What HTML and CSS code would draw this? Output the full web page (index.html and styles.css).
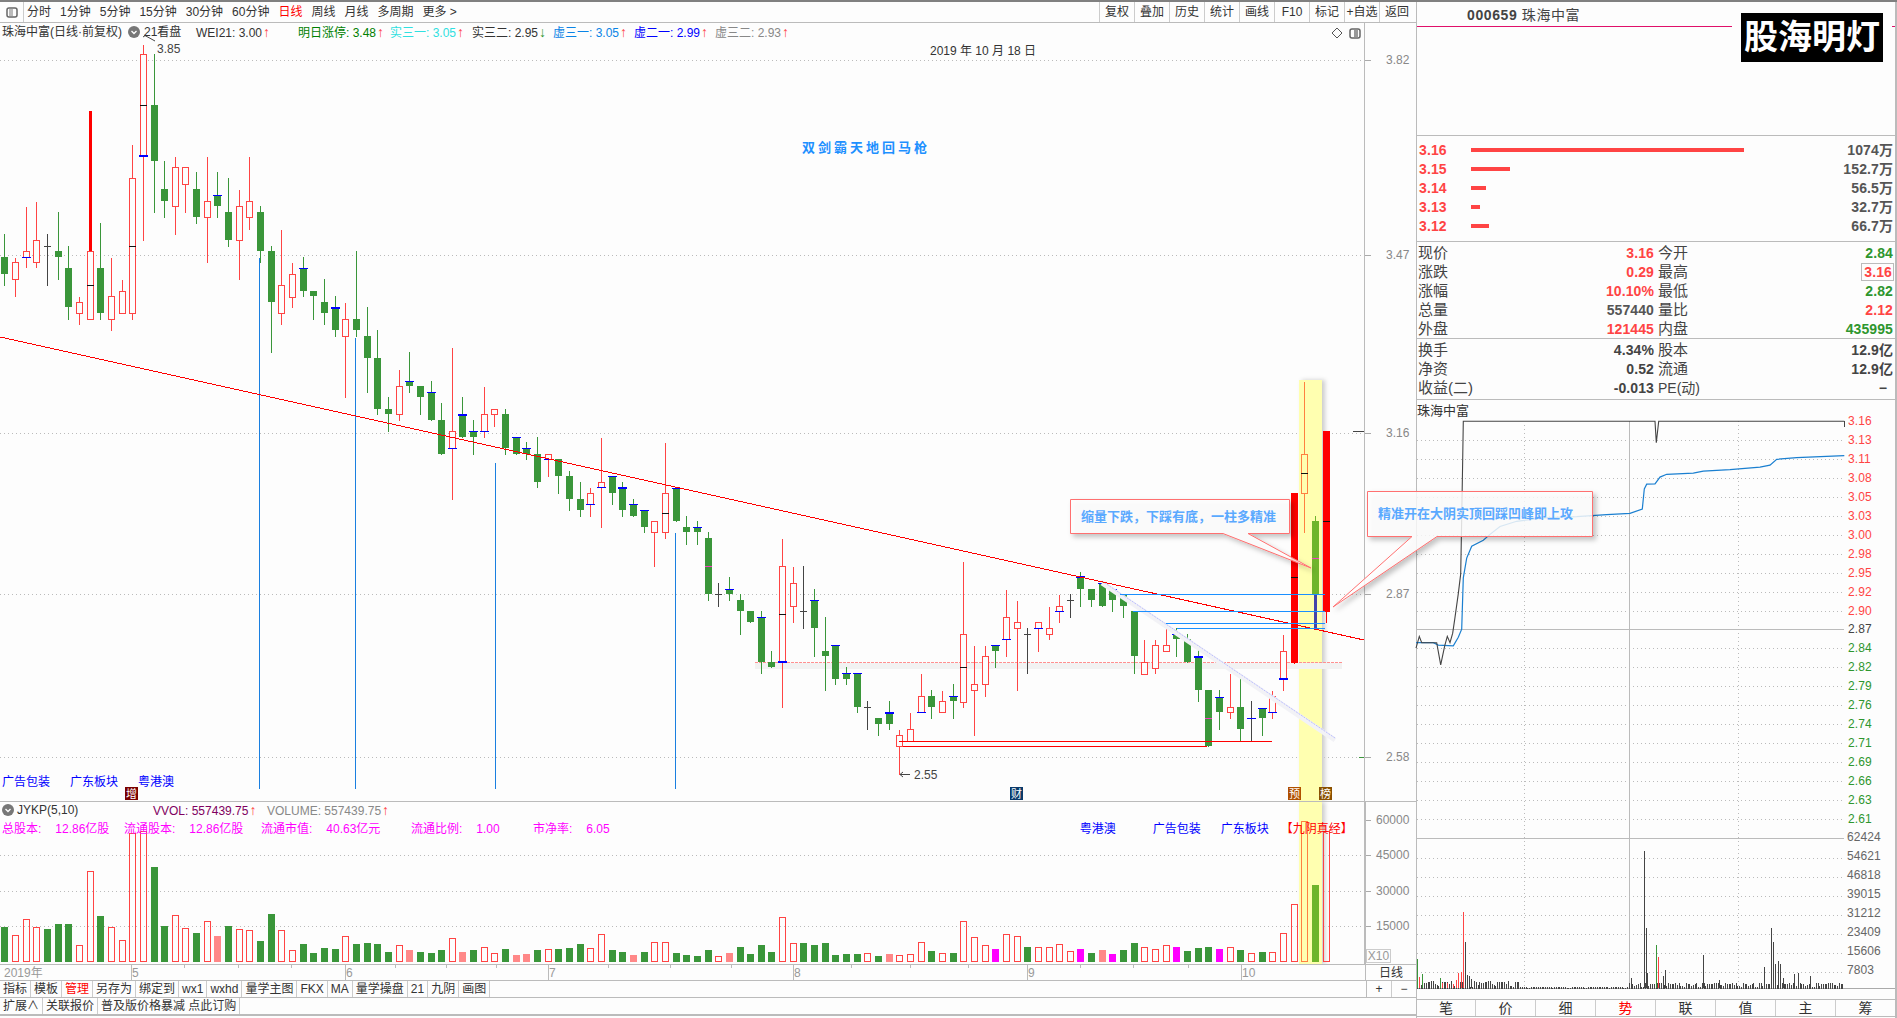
FILE: index.html
```html
<!DOCTYPE html><html lang="zh-CN"><head>
<meta charset="utf-8">
<title>珠海中富 日线</title>
<link rel="stylesheet" href="styles.css"></head><body>

<div class="app">
  <!-- LEFT : kline -->
  <div class="left">
    <div class="toolbar">
      <span class="panel-btn"><svg width="12" height="11" viewBox="0 0 12 11"><rect x="1" y="1" width="10" height="9" rx="2" fill="none" stroke="#666" stroke-width="1.5"/><rect x="3" y="2" width="4" height="7" fill="#bbb"/></svg></span>
      <nav class="periods">
        <span>分时</span><span>1分钟</span><span>5分钟</span><span>15分钟</span><span>30分钟</span><span>60分钟</span>
        <span class="on">日线</span><span>周线</span><span>月线</span><span>多周期</span><span>更多 &gt;</span>
      </nav>
      <div class="tools">
        <span>复权</span><span>叠加</span><span>历史</span><span>统计</span><span>画线</span><span>F10</span><span>标记</span><span>+自选</span><span>返回</span>
      </div>
    </div>

    <div class="pane pane-main">
      <svg id="kline" width="1415" height="778" viewBox="0 23 1415 778"></svg>
      <div class="legend legend-top">
        <span class="stock">珠海中富(日线·前复权)</span>
        <span class="lg-ico"><svg width="12" height="12" viewBox="0 0 12 12"><circle cx="6" cy="6" r="6" fill="#777"/><path d="M3.5 5l2.5 2.5L8.500 5" fill="none" stroke="#fff" stroke-width="1.300"/></svg></span>
        <span class="i-kan">21看盘</span>
        <span class="i-wei">WEI21: 3.00<b class="arr">↑</b></span>
        <span class="i-ming c-green">明日涨停: 3.48<b class="arr">↑</b></span>
        <span class="i-cyan c-cyan">实三一: 3.05<b class="arr">↑</b></span>
        <span class="i-s32">实三二: 2.95<b class="arr dn">↓</b></span>
        <span class="i-x31 c-sky">虚三一: 3.05<b class="arr">↑</b></span>
        <span class="i-x21 c-blue">虚二一: 2.99<b class="arr">↑</b></span>
        <span class="i-x32 c-gray">虚三二: 2.93<b class="arr">↑</b></span>
      </div>
      <div class="corner-ico">
        <svg width="12" height="12" viewBox="0 0 12 12"><path d="M6 1l5 5-5 5-5-5z" fill="none" stroke="#555"/></svg>
        <svg width="12" height="11" viewBox="0 0 12 11"><rect x="1" y="1" width="10" height="9" rx="2" fill="none" stroke="#666" stroke-width="1.500"/><rect x="5" y="2" width="4" height="7" fill="#999"/></svg>
      </div>
      <div class="sectors">
        <span>广告包装</span><span>广东板块</span><span>粤港澳</span>
      </div>
    </div>

    <div class="pane pane-vol">
      <svg id="volume" width="1415" height="162" viewBox="0 802 1415 162"></svg>
      <div class="legend legend-vol">
        <span class="lg-ico"><svg width="12" height="12" viewBox="0 0 12 12"><circle cx="6" cy="6" r="6" fill="#777"/><path d="M3.5 5l2.5 2.5L8.500 5" fill="none" stroke="#fff" stroke-width="1.300"/></svg></span>
        <span class="i-jykp">JYKP(5,10)</span>
        <span class="i-vvol c-purple">VVOL: 557439.75<b class="arr">↑</b></span>
        <span class="c-gray">VOLUME: 557439.75<b class="arr">↑</b></span>
      </div>
      <div class="legend legend-fin c-magenta">
        <span class="i-f1">总股本:<i></i>12.86亿股</span>
        <span class="i-f2">流通股本:<i></i>12.86亿股</span>
        <span class="i-f3">流通市值:<i></i>40.63亿元</span>
        <span class="i-f4">流通比例:<i></i>1.00</span>
        <span>市净率:<i></i>6.05</span>
        <span class="tag i-t1">粤港澳</span>
        <span class="tag i-t2">广告包装</span>
        <span class="tag i-t3">广东板块</span>
        <span class="tag-red">【九阴真经】</span>
      </div>
      <span class="x10">X10</span>
    </div>

    <div class="date-row">
      <svg id="dates" width="1365" height="15" viewBox="0 965 1365 15"></svg>
      <span class="period-name">日线</span>
    </div>

    <div class="btn-row">
      <div class="btns">
        <span>指标</span><span>模板</span><span class="on">管理</span><span>另存为</span><span>绑定到</span><span>wx1</span><span>wxhd</span><span>量学主图</span><span>FKX</span><span>MA</span><span>量学操盘</span><span>21</span><span>九阴</span><span>画图</span>
      </div>
      <div class="zoom-btns"><span>+</span><span>−</span></div>
    </div>
    <div class="btn-row btn-row-last">
      <div class="btns">
        <span>扩展∧</span><span>关联报价</span><span>普及版价格暴减 点此订购</span>
      </div>
    </div>
  </div>

  <!-- RIGHT : quote -->
  <aside class="right">
    <div class="head">
      <div class="title"><b>000659</b> 珠海中富</div>
      <div class="logo">股海明灯</div>
      <div class="head-tick"></div>
    </div>

    <div class="sell">
      <div class="sell-row"><b class="up">3.16</b><div><i style="width:273px"></i></div><b class="flat">1074万</b></div>
      <div class="sell-row"><b class="up">3.15</b><div><i style="width:39px"></i></div><b class="flat">152.7万</b></div>
      <div class="sell-row"><b class="up">3.14</b><div><i style="width:15px"></i></div><b class="flat">56.5万</b></div>
      <div class="sell-row"><b class="up">3.13</b><div><i style="width:9px"></i></div><b class="flat">32.7万</b></div>
      <div class="sell-row"><b class="up">3.12</b><div><i style="width:18px"></i></div><b class="flat">66.7万</b></div>
    </div>

    <div class="quote">
      <div class="q-row"><span>现价</span><b class="up">3.16</b><span>今开</span><b class="down">2.84</b></div>
      <div class="q-row"><span>涨跌</span><b class="up">0.29</b><span>最高</span><b class="up"><em class="boxed">3.16</em></b></div>
      <div class="q-row"><span>涨幅</span><b class="up">10.10%</b><span>最低</span><b class="down">2.82</b></div>
      <div class="q-row"><span>总量</span><b class="flat">557440</b><span>量比</span><b class="up">2.12</b></div>
      <div class="q-row"><span>外盘</span><b class="up">121445</b><span>内盘</span><b class="down">435995</b></div>
    </div>
    <div class="quote quote-fin">
      <div class="q-row"><span>换手</span><b class="dark">4.34%</b><span>股本</span><b class="dark">12.9亿</b></div>
      <div class="q-row"><span>净资</span><b class="dark">0.52</b><span>流通</span><b class="dark">12.9亿</b></div>
      <div class="q-row"><span>收益(二)</span><b class="dark">-0.013</b><span class="pe">PE(动)</span><b class="dark dash">−</b></div>
    </div>

    <div class="mini-name">珠海中富</div>
    <svg id="intraday" width="478" height="578" viewBox="1417 421 478 578"></svg>

    <div class="tabs">
      <span>笔</span><span>价</span><span>细</span><span class="on">势</span><span>联</span><span>值</span><span>主</span><span>筹</span>
    </div>
  </aside>
</div>

<!-- callouts sit over both columns -->
<svg class="notes" width="1897" height="1018" viewBox="0 0 1897 1018">
  <defs>
    <filter id="noteShadow" x="-10%" y="-10%" width="125%" height="140%">
      <feDropShadow dx="3" dy="3" stdDeviation="2.500" flood-color="#000" flood-opacity=".28"/>
    </filter>
  </defs>
  <path class="note" d="M1070.500 499.500H1289.500V533.500H1248L1311 568 1223 533.500H1070.500Z"/>
  <text class="note-text" x="1081" y="521">缩量下跌，下踩有底，一柱多精准</text>
  <path class="note" d="M1367.500 491.500H1592.500V536.500H1437L1333 607 1412 536.500H1367.500Z"/>
  <text class="note-text" x="1378" y="518">精准开在大阴实顶回踩凹峰即上攻</text>
</svg>

<script src="chart.js"></script>
</body></html>
```

FILE: styles.css
```css
/* ── shell ───────────────────────────────────────────────── */
*{box-sizing:border-box}
html,body{margin:0;height:100%;overflow:hidden}
body{position:relative;background:#fdfdfd;color:#333;
     font:12px/1 "Liberation Sans","Noto Sans CJK SC",sans-serif}
.app{display:flex;height:1018px;border-top:2px solid #808080}
.left{width:1416px;flex:none;display:flex;flex-direction:column}
.right{width:481px;flex:none;display:flex;flex-direction:column;
       border-left:1px solid #bbb;border-right:2px solid #bbb}
svg{display:block}
svg text{font-family:"Liberation Sans","Noto Sans CJK SC",sans-serif}

/* ── top toolbar ─────────────────────────────────────────── */
.toolbar{height:21px;display:flex;align-items:center;border-bottom:1px solid #bbb;flex:none}
.panel-btn{width:24px;height:100%;display:flex;align-items:center;justify-content:center;border-right:1px solid #ccc}
.periods{display:flex;gap:9px;margin-left:3px}
.periods .on{color:#f00}
.tools{margin-left:auto;display:flex;height:100%;margin-right:2px}
.tools span{width:35px;display:flex;align-items:center;justify-content:center;border-left:1px solid #ccc}

/* ── chart panes ─────────────────────────────────────────── */
.pane{position:relative;flex:none;border-bottom:1px solid #bbb}
.legend{position:absolute;left:0;display:flex;align-items:center;white-space:nowrap}
.legend-top{top:2px;height:14px;left:2px}
.legend-vol{top:1px;height:14px;left:2px}
.legend-fin{top:20px;height:14px;left:2px}
.legend-fin i{display:inline-block;width:14px}
.lg-ico{display:flex}
.arr{font-weight:700;color:#f44;font-size:14px;line-height:12px;margin-left:1px}
.arr.dn{color:#2e962e}
.stock{width:126px}
.i-kan{margin-left:4px;width:52px}
.i-wei{width:102px}
.i-ming{width:92px}
.i-cyan{width:82px}
.i-s32{width:81px}
.i-x31{width:81px}
.i-x21{width:81px}
.i-jykp{margin-left:3px;width:136px}
.i-vvol{width:114px}
.i-f1{width:122px}
.i-f2{width:137px}
.i-f3{width:150px}
.i-f4{width:122px}
.legend-fin .tag{color:#00f}
.legend-fin .i-t1{margin-left:470px;width:73px}
.legend-fin .i-t2{width:68px}
.legend-fin .i-t3{width:60px}
.tag-red{color:#f00}
.c-green{color:#008000}
.c-cyan{color:#2fe0e0}
.c-sky{color:#0a84e6}
.c-blue{color:#00f}
.c-gray{color:#888}
.c-purple{color:#800060}
.c-magenta{color:#f0f}
.corner-ico{position:absolute;top:4px;left:1331px;display:flex;gap:6px;align-items:center}
.sectors{position:absolute;left:2px;bottom:13px;display:flex;gap:20px;color:#00f}
.x10{position:absolute;left:1366px;bottom:1px;width:25px;height:14px;border:1px solid #ccc;
     color:#999;display:flex;align-items:center;justify-content:center}
.axis-label{fill:#888;font-size:12px}
.badge{fill:#fff;font-size:11px}
.hi-lo{fill:#444;font-size:12px}
.day{fill:#333;font-size:12px}
.sword{fill:#1e90ff;font-size:13px;font-weight:700;letter-spacing:3px}
.date-label{fill:#999;font-size:12px}

/* ── bottom bars ─────────────────────────────────────────── */
.date-row{height:16px;flex:none;display:flex;border-bottom:1px solid #bbb}
.period-name{flex:1;border-left:1px solid #bbb;display:flex;align-items:center;justify-content:center}
.btn-row{height:17px;flex:none;display:flex;border-bottom:1px solid #bbb}
.btn-row-last{height:18px;border-bottom-width:2px}
.btns{display:flex;height:100%}
.btns span{padding:0 3px;display:flex;align-items:center;border-right:1px solid #ccc}
.btns .on{color:#f00}
.zoom-btns{margin-left:auto;width:50px;display:flex;border-left:1px solid #bbb}
.zoom-btns span{flex:1;display:flex;align-items:center;justify-content:center}
.zoom-btns span+span{border-left:1px solid #ccc}

/* ── quote panel ─────────────────────────────────────────── */
.head{height:134px;flex:none;display:flex;align-items:flex-start;border-bottom:1px solid #bbb}
.title{width:315px;height:25px;padding:6px 0 0 50px;border-bottom:1px solid #e0106a;
       font-size:14px;letter-spacing:.6px;color:#444}
.logo{width:142px;height:49px;margin:11px 0 0 9px;background:#000;color:#fff;
      font-size:34px;font-weight:700;line-height:49px;text-align:center}
.head-tick{width:3px;height:1px;margin:24px 0 0 9px;background:#e0106a}
.up{color:#f44}
.down{color:#2e962e}
.flat{color:#555}
.dark{color:#444}
.sell{height:106px;flex:none;padding:4px 0 0 2px;border-bottom:1px solid #bbb}
.sell-row{height:19px;display:grid;grid-template-columns:52px 1fr auto;align-items:center;padding-right:2px}
.sell-row b,.q-row b{font-size:14px;letter-spacing:.1px}
.sell-row i{display:block;height:4px;background:#f44}
.quote{height:97px;flex:none;padding:1px 0 0 1px;border-bottom:1px solid #bbb}
.quote-fin{height:61px}
.q-row{height:19px;display:grid;grid-template-columns:60px 176px 60px 179px;align-items:center;
       font-size:15px;color:#444}
.q-row b{text-align:right}
.q-row span:nth-of-type(2){padding-left:4px}
.q-row .pe{font-size:14px}
.boxed{font-style:normal;display:inline-block;border:1px solid #bbb;padding:1px 1px 1px 2px;margin-right:-1px}
.dash{padding-right:6px}
.mini-name{height:21px;flex:none;padding:4px 0 0;font-size:13px}
#intraday{overflow:visible}
.tabs{height:18px;flex:none;display:flex;border-top:1px solid #bbb;border-bottom:1px solid #bbb;font-size:14px}
.tabs span{width:60px;flex:none;display:flex;align-items:center;justify-content:center;border-left:1px solid #ccc}
.tabs span:first-child{width:58px;border-left:0}
.tabs .on{color:#f00}
.mini-label{font-size:12px;letter-spacing:.1px}

/* ── callouts ────────────────────────────────────────────── */
.notes{position:absolute;left:0;top:0;pointer-events:none}
.note{fill:#fff;fill-opacity:.8;stroke:#ff7070;stroke-width:1;filter:url(#noteShadow)}
.note-text{fill:#5aa9ff;font-size:13px;font-weight:700}
```

FILE: chart.js
```js
/* colours */
const GREEN="#3a963a",RED="#ff4444",BG="#fdfdfd",GRID="#bbb",ORANGE="#ff8040",LIME="#6fb52c",
      PINK="#ff8888",MAGENTA="#ff00ff",BLUE="#0000ff",LINE_BLUE="#1a7fe0";

/* helpers */
const box=(x,y,w,h,c)=>`<rect x="${x}" y="${y}" width="${w}" height="${h}" fill="${c}"/>`;
const seg=(x1,y1,x2,y2,c,extra="")=>`<line x1="${x1}" y1="${y1}" x2="${x2}" y2="${y2}" stroke="${c}" ${extra}/>`;
const dotted=(x1,y,x2)=>seg(x1,y+.5,x2,y+.5,GRID,'stroke-dasharray="1 3"');
const label=(x,y,s,cls,fill)=>`<text x="${x}" y="${y}" class="${cls}"${fill?` fill="${fill}" style="fill:${fill}"`:""}>${s}</text>`;
const candleX=i=>Math.round(4.33+10.655*i);

/* candles, read off in thirds of a pixel from a base y
   [kind, high, bodyTop, bodyBottom, low, ...marks]  b=thin blue B=thick blue k=black m=magenta */
const groups=[
 {base:30,rows:[
  ['g',612,681,731,765],['r',685,697,748,797],['r',531,664,682,712,'b682'],['r',516,631,697,712],
  ['k',612,649,649,765],['g',546,663,680,746],['g',648,714,830,866],['r',800,817,850,881],
  ['r',664,664,868,868,'k766'],['g',579,714,848,866],['r',684,799,868,899],['r',750,784,850,850],
  ['r',345,445,850,866,'k649'],['r',45,73,378,630,'k226','B378'],['g',72,225,392,546],['g',393,477,512,560],
  ['r',381,412,529,612],['r',412,412,463,546],['g',426,477,560,578],['r',381,514,562,695],
  ['g',426,496,527,560,'b496'],['g',444,546,629,647],['r',480,529,631,746],['r',381,514,562,596],
  ['g',528,546,662,695]]},
 {base:200,rows:[
  ['g',138,153,305,455],['r',90,256,340,372],['r',190,223,290,320],['g',171,205,272,288,'b205'],
  ['g',273,273,288,356],['g',237,306,338,372],['g',288,323,389,407,'B323'],['r',310,358,409,590],
  ['g',153,358,389,407],['g',321,408,473,575],['g',390,473,626,642],['g',591,627,642,692],
  ['r',510,559,643,660],['g',457,544,557,576,'b544'],['g',558,558,590,642],['g',543,577,659,659,'b577'],
  ['g',610,660,761,761],['r',444,694,745,896,'b745'],['g',591,644,710,710,'B644'],['g',660,694,710,762,'b694'],
  ['r',561,643,694,710,'b694'],['r',628,628,643,678]]},
 {base:430,rows:[
  ['g',-63,-48,55,71],['g',22,22,71,71,'b22'],['g',37,55,71,87,'b55'],['g',21,71,155,170],
  ['r',73,73,88,137,'b88'],['g',87,87,137,188],['g',123,138,206,239],['g',156,207,239,257],
  ['r',174,190,223,257,'b223'],['r',24,157,172,290,'b172'],['g',139,139,188,221,'b139'],['g',156,174,239,257,'B174'],
  ['g',207,223,257,257,'b223'],['g',241,241,290,305,'b241'],['r',274,274,307,407],['r',39,190,307,323,'k250'],
  ['g',173,173,272,272,'b173'],['g',258,291,305,341],['g',273,292,305,341,'b292'],['g',307,324,491,509,'m409'],
  ['k',459,493,493,527],['g',441,478,491,509,'b478'],['g',491,511,542,611],['g',543,543,575,575],
  ['g',543,562,695,728,'b562'],['g',663,696,710,710],['r',327,409,695,830,'k553','B695'],['r',411,460,529,575],
  ['k',408,544,544,593],['g',477,511,593,677,'b511'],['g',561,663,678,779],['g',646,646,746,762,'b646'],
  ['g',711,730,746,762,'b730'],['g',730,730,830,846,'b730'],['k',813,831,831,896],['g',864,864,881,914],
  ['g',813,849,881,896,'B849'],['r',900,916,949,1033],['r',849,898,934,934],['r',732,799,847,847,'b847'],
  ['g',780,798,830,863],['r',783,814,847,847],['g',762,799,812,863,'b799'],['r',396,613,815,830,'k712'],
  ['r',648,763,781,914],['r',648,679,763,797],['g',646,646,662,711,'b646']]},
 {base:370,rows:[
  ['r',660,742,808,857,'b808'],['r',693,757,775,960],['k',775,792,792,908],['r',757,757,775,843,'b775'],
  ['r',711,775,793,807],['r',675,709,724,757,'b724'],['k',672,691,691,741],['g',606,622,657,708,'B622'],
  ['g',657,657,690,708],['g',632,639,708,708,'b639'],['g',658,658,690,723,'b658'],['g',673,673,708,741,'b673'],
  ['g',724,724,858,908],['r',810,877,911,911],['r',810,826,893,908],['r',760,826,844,844],
  ['g',775,793,807,857,'b793'],['g',793,807,876,876],['g',826,861,960,993,'B861'],['g',960,960,1128,1128,'m1045'],
  ['g',960,980,1025,1076,'b980'],['r',912,1012,1027,1043],['g',927,1011,1076,1113],['k',993,1045,1045,1113,'b1045'],
  ['g',1013,1013,1043,1094,'b1013'],['r',963,979,1027,1043,'b1027'],['r',795,844,927,960,'B927'],
  ['R',369,369,878,878,'k622'],['o',37,253,370,485,'k310'],['l',438,453,672,672,'m565'],['R',183,183,725,755,'k454']]}
];

/* volume tops, in thirds of a pixel below y=760 */
const vols=[
 ['g',501],['r',526],['r',478],['r',502],['g',507],['g',492],['g',492],['r',556],['r',334],['g',468],
 ['r',502],['r',541],['r',220],['r',214],['g',322],['g',498],['r',466],['r',505],['g',519],['r',484],
 ['p',528],['g',498],['r',508],['r',511],['g',543],['g',462],['r',511],['r',571],['g',552],['g',579],
 ['g',564],['g',567],['r',529],['g',552],['g',549],['g',552],['g',576],['r',556],['p',570],['g',576],
 ['g',579],['g',570],['r',535],['p',576],['g',570],['r',562],['r',580],['g',567],['p',585],['p',582],
 ['g',570],['r',568],['g',567],['g',564],['g',552],['r',565],['r',523],['g',570],['g',576],['p',585],
 ['g',576],['r',547],['r',547],['g',579],['g',585],['g',588],['g',570],['r',589],['p',579],['g',561],
 ['g',582],['g',555],['g',576],['r',472],['r',550],['g',549],['g',555],['g',549],['g',585],['g',582],
 ['g',582],['r',580],['g',588],['p',582],['r',586],['r',583],['r',547],['g',573],['r',580],['g',579],
 ['r',484],['r',532],['r',556],['m',567],['r',523],['r',529],['g',561],['r',562],['r',562],['r',553],
 ['r',574],['m',567],['g',579],['p',570],['m',582],['g',570],['g',549],['r',562],['r',568],['r',556],
 ['m',561],['g',573],['g',564],['g',561],['m',567],['r',562],['g',570],['r',580],['g',576],['r',576],
 ['r',520],['r',433],['o',184],['l',375],['r',214]];

function drawCandle(c,x,base){
  const Y=z=>Math.round(base+z/3),[kind,hi,top,bot,lo,...marks]=c;
  const col={g:GREEN,r:RED,k:"#444",R:"#ff0000",o:ORANGE,l:LIME}[kind];
  let s=box(x,Y(hi),1,Y(lo)-Y(hi)+1,col);
  const h=Math.max(Y(bot)-Y(top),1);
  if(kind==="k") s+=box(x-3,Y(top),7,1,col);
  else if(kind==="r"||kind==="o")
    s+=`<rect x="${x-2.5}" y="${Y(top)+.5}" width="6" height="${h}" fill="${kind==="o"?"#ffffb0":BG}" stroke="${col}"/>`;
  else s+=box(x-3,Y(top),7,h,col);
  marks.forEach(m=>{
    const t=m[0],y=Y(+m.slice(1));
    if(t==="b") s+=box(x-4,y,9,1,BLUE);
    if(t==="B") s+=box(x-4,y-1,9,2,BLUE);
    if(t==="k") s+=box(x-3,y,7,1,"#111");
    if(t==="m") s+=box(x-3,y,7,1,"#f040c0");
  });
  return s;
}

/* main chart */
function drawKline(){
  let s="";
  [60,255,433,594,757].forEach((y,n)=>{
    s+=dotted(0,y,1364)+seg(1364,y+.5,1371,y+.5,"#aaa");
    s+=label(1386,y+4,["3.82","3.47","3.16","2.87","2.58"][n],"axis-label");
  });
  s+=seg(1364.5,23,1364.5,801,"#bbb");
  s+=seg(1353,431.5,1364,431.5,"#444")+seg(1359,757.5,1364,757.5,GREEN);
  s+=box(1299,380,23,421,"#ffffb0").replace("<rect",'<rect style="filter:drop-shadow(3px 0 2px #ccc)"');

  /* blue marks */
  [[259,258],[355,338],[495,463],[675,533]].forEach(([x,y])=>{s+=box(x,y,1,789-y,LINE_BLUE)});

  /* dashed level */
  s+=box(755,663,587,6,"#f2f2f2")+seg(755,662.5,1342,662.5,"#ff9090",'stroke-dasharray="3 1"');

  s+=box(89,111,3,140,"#ff0000");
  let i=0;
  groups.forEach(g=>g.rows.forEach(c=>{s+=drawCandle(c,candleX(i++),g.base)}));
  s+=box(1314,594,3,35,"#4444aa");

  /* drawn lines */
  s+=seg(1102,583,1335,740,"#f2f2f6",'stroke-width="5"');
  s+=seg(1102,581,1335,738,"#b4b8ff",'stroke-dasharray="2 1" stroke-width=".9"');
  s+=`<g shape-rendering="crispEdges">`+seg(0,337,1364,640,"#ff0000")+
     seg(899,741.5,1272,741.5,"#ff0000")+seg(903,746.5,1207,746.5,"#ff0000");
  [[594,1120],[611,1133],[623,1166],[628,1177]].forEach(([y,x])=>{s+=seg(x,y+.5,1325,y+.5,"#1a8fff")});
  s+=`</g>`;

  /* texts on the canvas */
  s+=label(930,55,"2019 年 10 月 18 日","day");
  s+=label(802,152,"双剑霸天地回马枪","sword");
  s+=seg(143,37,146,35,"#444")+seg(144,35,155,41,"#444");
  s+=label(157,53,"3.85","hi-lo");
  s+=seg(900,774.5,910,774.5,"#444")+seg(900,774.5,903,772,"#444")+seg(900,774.5,903,777,"#444");
  s+=label(914,779,"2.55","hi-lo");
  [[125,"增","#7a0000"],[1010,"财","#0a3a6a"],[1288,"预","#b05000"],[1319,"榜","#8a5000"]].forEach(([x,t,c])=>{
    s+=box(x,787,13,13,c)+label(x+1,798,t,"badge");
  });
  document.getElementById("kline").innerHTML=s;
}

/* volume pane */
function drawVolume(){
  let s="";
  [[855,"45000"],[891,"30000"],[926,"15000"],[820,"60000"]].forEach(([y,t])=>{
    if(t!=="60000") s+=dotted(0,y,1364);
    s+=seg(1365,y+.5,1371,y+.5,"#aaa")+label(1376,y+4,t,"axis-label");
  });
  s+=box(1364,802,2,162,"#bbb");
  s+=box(1299,802,23,162,"#ffffb0").replace("<rect",'<rect style="filter:drop-shadow(3px 0 2px #ccc)"');
  vols.forEach(([kind,z],i)=>{
    const x=candleX(i),y=Math.round(760+z/3),h=962-y;
    if(kind==="r"||kind==="o")
      s+=`<rect x="${x-2.5}" y="${y+.5}" width="6" height="${h-1}" fill="none" stroke="${kind==="o"?ORANGE:RED}"/>`;
    else s+=box(x-3,y,7,h,{g:GREEN,p:PINK,m:MAGENTA,l:LIME}[kind]);
  });
  document.getElementById("volume").innerHTML=s;
}

/* date axis */
function drawDates(){
  let s=label(4,977,"2019年","date-label");
  [[131,"5"],[345,"6"],[548,"7"],[793,"8"],[1027,"9"],[1241,"10"]].forEach(([x,t])=>{
    s+=seg(x+.5,965,x+.5,980,"#bbb")+label(x+1,977,t,"date-label");
  });
  [184,238,291,395,446,496,608,670,731,851,910,968,1080,1133,1188].forEach(x=>{s+=seg(x+.5,965,x+.5,968,"#bbb")});
  document.getElementById("dates").innerHTML=s;
}

/* intraday, measured off the reference: z is 2.53 units per px below y=400 */
function drawIntraday(){
  const PX=z=>+(1410+z/3).toFixed(1),PY=z=>+(400+z/2.53).toFixed(1);
  const path=pts=>pts.map(([a,b])=>PX(a)+","+PY(b)).join(" ");
  const prices=["3.16","3.13","3.11","3.08","3.05","3.03","3.00","2.98","2.95","2.92","2.90","2.87",
                "2.84","2.82","2.79","2.76","2.74","2.71","2.69","2.66","2.63","2.61"];
  const volsAxis=["62424","54621","46818","39015","31212","23409","15606","7803"];
  let s="";
  prices.forEach((p,i)=>{
    const y=Math.round(421+i*18.95);
    if(i&&i!==11) s+=dotted(1417,y,1844);
    s+=label(1848,y+4,p,"mini-label",i<11?"#ff4444":i===11?"#444":"#2e962e");
  });
  volsAxis.forEach((p,i)=>{
    const y=Math.round(838.5+i*19);
    if(i) s+=dotted(1417,y,1844);
    s+=label(1847,y+2,p,"mini-label","#666");
  });
  s+=seg(1524.5,421,1524.5,988,GRID,'stroke-dasharray="1 3"')+seg(1738.5,421,1738.5,988,GRID,'stroke-dasharray="1 3"');
  s+=seg(1629.5,421,1629.5,988,"#bbb")+seg(1417,629.5,1844,629.5,"#bbb")+seg(1417,838.5,1844,838.5,"#bbb");
  s+=seg(1417,988.5,1895,988.5,"#aaa")+seg(1417,421.5,1530,421.5,"#fdfdfd");
  s+=seg(1844.5,421,1844.5,427,"#444");

  /* minute volumes: small ones from a fixed sequence, peaks by hand */
  let seed=7;const rnd=()=>(seed=(seed*137+59)%257)/257;
  for(let k=0;k<240;k++){
    const x=Math.round(1417+k*1.78);
    const top=k<58?1+rnd()*6:k<118?rnd()*1.4:1+rnd()*4;
    s+=box(x,Math.round(988-top),1,Math.round(top)+1,"#444");
  }
  [[22,1413,"g"],[28,1460,"r"],[36,1452,"g"],[91,1462,"g"],[97,1475,"r"],[112,1475,"r"],[130,1478,"r"],[138,1467,"r"],
   [145,1450,"r"],[152,1447,"r"],[160,1295,"r"],[166,1370,"k"],[172,1455,"k"],[178,1457,"k"],[184,1465,"k"],
   [663,1462,"k"],[703,1140,"k"],[709,1335,"k"],[712,1450,"k"],[739,1378,"g"],[745,1408,"r"],[760,1458,"k"],
   [765,1441,"k"],[880,1403,"k"],[928,1468,"k"],[1063,1435,"k"],[1084,1335,"k"],[1090,1370,"k"],[1094,1428,"k"],
   [1105,1420,"k"],[1111,1427,"k"],[1118,1462,"k"],[1153,1453,"k"],[1165,1450,"k"],[1201,1458,"k"]
  ].forEach(([zx,zy,c])=>{
    const y=Math.round(PY(zy));
    s+=box(Math.round(PX(zx)),y,1,988-y,{g:GREEN,r:RED,k:"#444"}[c]);
  });

  const price=[[18,628],[28,598],[35,614],[80,614],[92,670],[104,622],[112,598],[120,614],[128,590],[135,550],
               [145,490],[152,440],[155,300],[158,150],[160,54],[735,54],[739,108],[746,54],[1303,54]];
  const avg=[[18,614],[70,614],[85,620],[130,622],[145,600],[155,580],[160,450],[170,400],[185,370],[220,355],
             [240,340],[270,320],[320,307],[400,298],[500,295],[590,290],[660,287],[697,276],[703,225],[710,213],
             [735,212],[750,195],[770,188],[850,185],[880,180],[960,176],[1050,170],[1080,165],[1100,150],[1160,146],[1303,141]];
  s+=`<polyline points="${path(avg)}" fill="none" stroke="#1a7fd0" stroke-width="1.2"/>`;
  s+=`<polyline points="${path(price)}" fill="none" stroke="#444" stroke-width="1.1"/>`;
  document.getElementById("intraday").innerHTML=s;
}

drawKline();
drawVolume();
drawDates();
drawIntraday();
```
